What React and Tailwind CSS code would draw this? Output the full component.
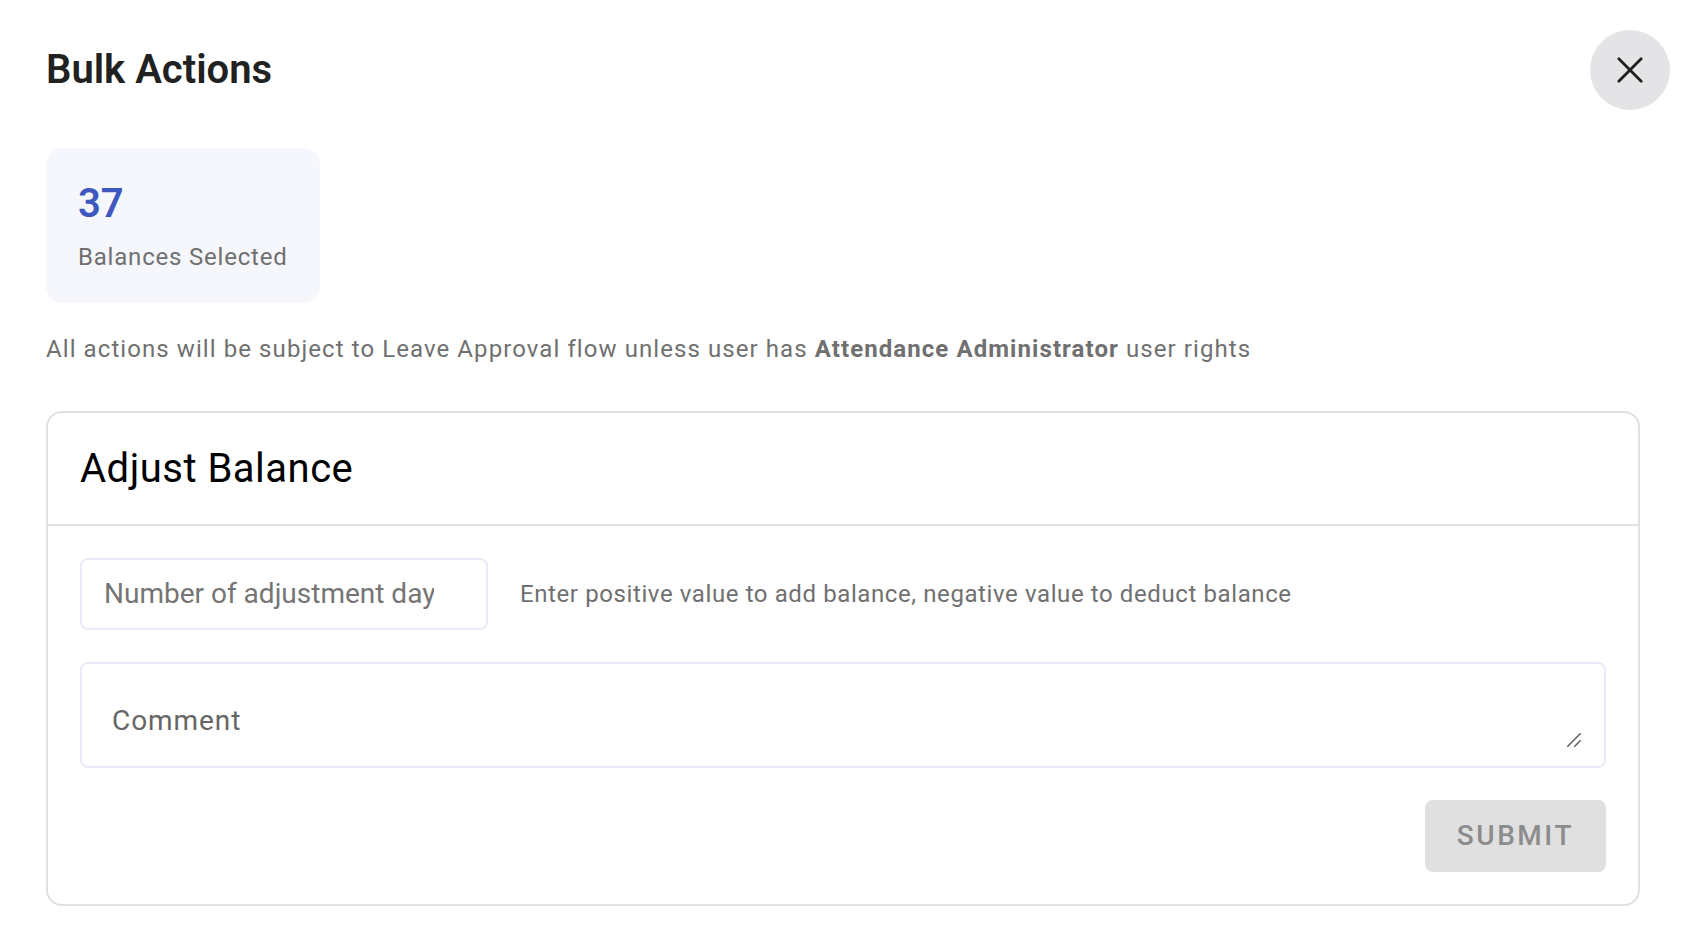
import { useState } from 'react';

const CloseIcon = () => (
  <svg width="28" height="28" viewBox="0 0 28 28" fill="none" stroke="#1f1f1f" strokeWidth="2.8" strokeLinecap="round" aria-hidden="true">
    <path d="M2.8 2.8L25.2 25.2M25.2 2.8L2.8 25.2" />
  </svg>
);

const ResizeGrip = () => (
  <svg className="absolute bottom-5 right-6 pointer-events-none" width="16" height="16" viewBox="0 0 16 16" fill="none" stroke="#5f5f5f" strokeWidth="1.5" aria-hidden="true">
    <path d="M1.3 14.7L14.7 1.3M8.3 14.7L14.7 8.3" />
  </svg>
);

const App = () => {
  const [days, setDays] = useState('');
  const [comment, setComment] = useState('');

  const handleSubmit = (e) => {
    e.preventDefault();
  };

  return (
    <div className="min-h-screen bg-white font-['Roboto',sans-serif] text-[#707070]">
      <header className="flex items-center justify-between pl-[46px] pr-[18px] pt-[30px]">
        <h1 className="text-[40px] leading-[44px] font-semibold text-[#212121]">Bulk Actions</h1>
        <button type="button" aria-label="Close" className="flex size-20 items-center justify-center rounded-full bg-[#e4e4e6]">
          <CloseIcon />
        </button>
      </header>

      <main className="pl-[46px] pr-12 pt-[38px]">
        <div className="w-fit rounded-2xl bg-[#f6f7fc] px-8 pt-[34px] pb-[30px]">
          <p className="text-[40px] leading-[44px] font-semibold text-[#3f58bd]">37</p>
          <p className="mt-4 text-2xl leading-[31px] tracking-[0.0333em]">Balances Selected</p>
        </div>

        <p className="mt-[30px] text-2xl leading-[32px] tracking-[0.045em]">
          All actions will be subject to Leave Approval flow unless user has{' '}
          <strong className="font-bold">Attendance Administrator</strong> user rights
        </p>

        <section className="mt-[46px] rounded-2xl border-2 border-[#e0e0e0]">
          <h2 className="border-b-2 border-[#dee2e6] px-8 pt-[34px] pb-[33px] text-[40px] leading-[44px] font-normal tracking-[0.0125em] text-black">
            Adjust Balance
          </h2>

          <form onSubmit={handleSubmit} className="p-8">
            <div className="flex items-center gap-8">
              <input
                id="days"
                type="text"
                inputMode="numeric"
                aria-label="Number of adjustment days"
                placeholder="Number of adjustment days"
                value={days}
                onChange={(e) => setDays(e.target.value)}
                className="h-[72px] w-[408px] rounded-lg border-2 border-[#e8eaf8] pb-[2px] pl-[22px] pr-[52px] text-[28px] text-[#212121] outline-none placeholder:text-[#757575]"
              />
              <label htmlFor="days" className="text-2xl leading-[32px] tracking-wide">
                Enter positive value to add balance, negative value to deduct balance
              </label>
            </div>

            <div className="relative mt-8">
              <textarea
                aria-label="Comment"
                placeholder="Comment"
                rows={1}
                value={comment}
                onChange={(e) => setComment(e.target.value)}
                className="block h-[106px] w-full resize-none rounded-lg border-2 border-[#e8eaf8] px-[30px] pt-[39px] text-[28px] leading-[36px] tracking-[0.0333em] text-[#212121] outline-none placeholder:text-[#666666]"
              />
              <ResizeGrip />
            </div>

            <div className="mt-8 flex justify-end">
              <button type="submit" disabled className="h-[72px] rounded-lg bg-[#e0e0e0] px-8 text-[28px] font-medium tracking-[0.09em] text-[#8c8c8c]">
                SUBMIT
              </button>
            </div>
          </form>
        </section>
      </main>
    </div>
  );
};

export default App;
